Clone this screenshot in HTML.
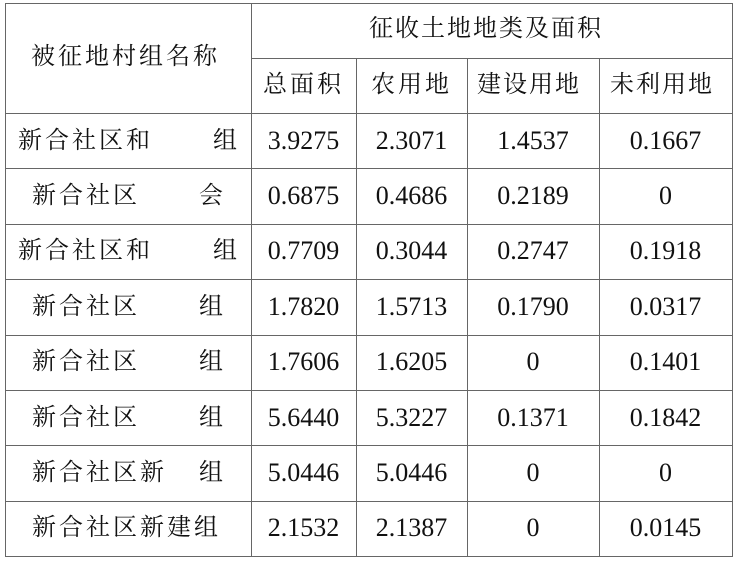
<!DOCTYPE html>
<html><head><meta charset="utf-8"><style>
body{margin:0;width:740px;height:563px;background:#fff;position:relative;overflow:hidden;font-family:"Liberation Serif","Noto Serif CJK SC",serif;color:#111}
.h{position:absolute;background:#666;height:1px}
.v{position:absolute;background:#666;width:1px}
.t{position:absolute;font-size:24px;line-height:30px;white-space:nowrap}
.c{letter-spacing:3px}
.n{position:absolute;font-size:26px;line-height:30px;text-align:center}
</style></head><body>
<div class="h" style="left:5px;width:728px;top:3px"></div>
<div class="h" style="left:251px;width:482px;top:58px"></div>
<div class="h" style="left:5px;width:728px;top:113px"></div>
<div class="h" style="left:5px;width:728px;top:168px"></div>
<div class="h" style="left:5px;width:728px;top:224px"></div>
<div class="h" style="left:5px;width:728px;top:279px"></div>
<div class="h" style="left:5px;width:728px;top:335px"></div>
<div class="h" style="left:5px;width:728px;top:390px"></div>
<div class="h" style="left:5px;width:728px;top:445px"></div>
<div class="h" style="left:5px;width:728px;top:501px"></div>
<div class="h" style="left:5px;width:728px;top:556px"></div>
<div class="v" style="left:5px;top:3px;height:554px"></div>
<div class="v" style="left:251px;top:3px;height:554px"></div>
<div class="v" style="left:356px;top:58px;height:499px"></div>
<div class="v" style="left:467px;top:58px;height:499px"></div>
<div class="v" style="left:599px;top:58px;height:499px"></div>
<div class="v" style="left:732px;top:3px;height:554px"></div>

<div class="t c" style="left:31px;top:42px">被征地村组名称</div>
<div class="t c" style="left:369px;top:14px;letter-spacing:2px">征收土地地类及面积</div>
<div class="t c" style="left:263px;top:70px">总面积</div>
<div class="t c" style="left:371px;top:70px">农用地</div>
<div class="t c" style="left:477px;top:70px;letter-spacing:2px">建设用地</div>
<div class="t c" style="left:610px;top:70px;letter-spacing:2px">未利用地</div>

<div class="t c" style="left:18px;top:126px">新合社区和</div><div class="t" style="left:213px;top:126px">组</div>
<div class="t c" style="left:32px;top:181px">新合社区</div><div class="t" style="left:199px;top:181px">会</div>
<div class="t c" style="left:18px;top:236px">新合社区和</div><div class="t" style="left:213px;top:236px">组</div>
<div class="t c" style="left:32px;top:292px">新合社区</div><div class="t" style="left:199px;top:292px">组</div>
<div class="t c" style="left:32px;top:347px">新合社区</div><div class="t" style="left:199px;top:347px">组</div>
<div class="t c" style="left:32px;top:403px">新合社区</div><div class="t" style="left:199px;top:403px">组</div>
<div class="t c" style="left:32px;top:458px">新合社区新</div><div class="t" style="left:199px;top:458px">组</div>
<div class="t c" style="left:32px;top:513px">新合社区新建组</div>

<div class="n" style="left:251px;width:105px;top:126px">3.9275</div><div class="n" style="left:356px;width:111px;top:126px">2.3071</div><div class="n" style="left:467px;width:132px;top:126px">1.4537</div><div class="n" style="left:599px;width:133px;top:126px">0.1667</div>
<div class="n" style="left:251px;width:105px;top:181px">0.6875</div><div class="n" style="left:356px;width:111px;top:181px">0.4686</div><div class="n" style="left:467px;width:132px;top:181px">0.2189</div><div class="n" style="left:599px;width:133px;top:181px">0</div>
<div class="n" style="left:251px;width:105px;top:236px">0.7709</div><div class="n" style="left:356px;width:111px;top:236px">0.3044</div><div class="n" style="left:467px;width:132px;top:236px">0.2747</div><div class="n" style="left:599px;width:133px;top:236px">0.1918</div>
<div class="n" style="left:251px;width:105px;top:292px">1.7820</div><div class="n" style="left:356px;width:111px;top:292px">1.5713</div><div class="n" style="left:467px;width:132px;top:292px">0.1790</div><div class="n" style="left:599px;width:133px;top:292px">0.0317</div>
<div class="n" style="left:251px;width:105px;top:347px">1.7606</div><div class="n" style="left:356px;width:111px;top:347px">1.6205</div><div class="n" style="left:467px;width:132px;top:347px">0</div><div class="n" style="left:599px;width:133px;top:347px">0.1401</div>
<div class="n" style="left:251px;width:105px;top:403px">5.6440</div><div class="n" style="left:356px;width:111px;top:403px">5.3227</div><div class="n" style="left:467px;width:132px;top:403px">0.1371</div><div class="n" style="left:599px;width:133px;top:403px">0.1842</div>
<div class="n" style="left:251px;width:105px;top:458px">5.0446</div><div class="n" style="left:356px;width:111px;top:458px">5.0446</div><div class="n" style="left:467px;width:132px;top:458px">0</div><div class="n" style="left:599px;width:133px;top:458px">0</div>
<div class="n" style="left:251px;width:105px;top:513px">2.1532</div><div class="n" style="left:356px;width:111px;top:513px">2.1387</div><div class="n" style="left:467px;width:132px;top:513px">0</div><div class="n" style="left:599px;width:133px;top:513px">0.0145</div>
</body></html>
